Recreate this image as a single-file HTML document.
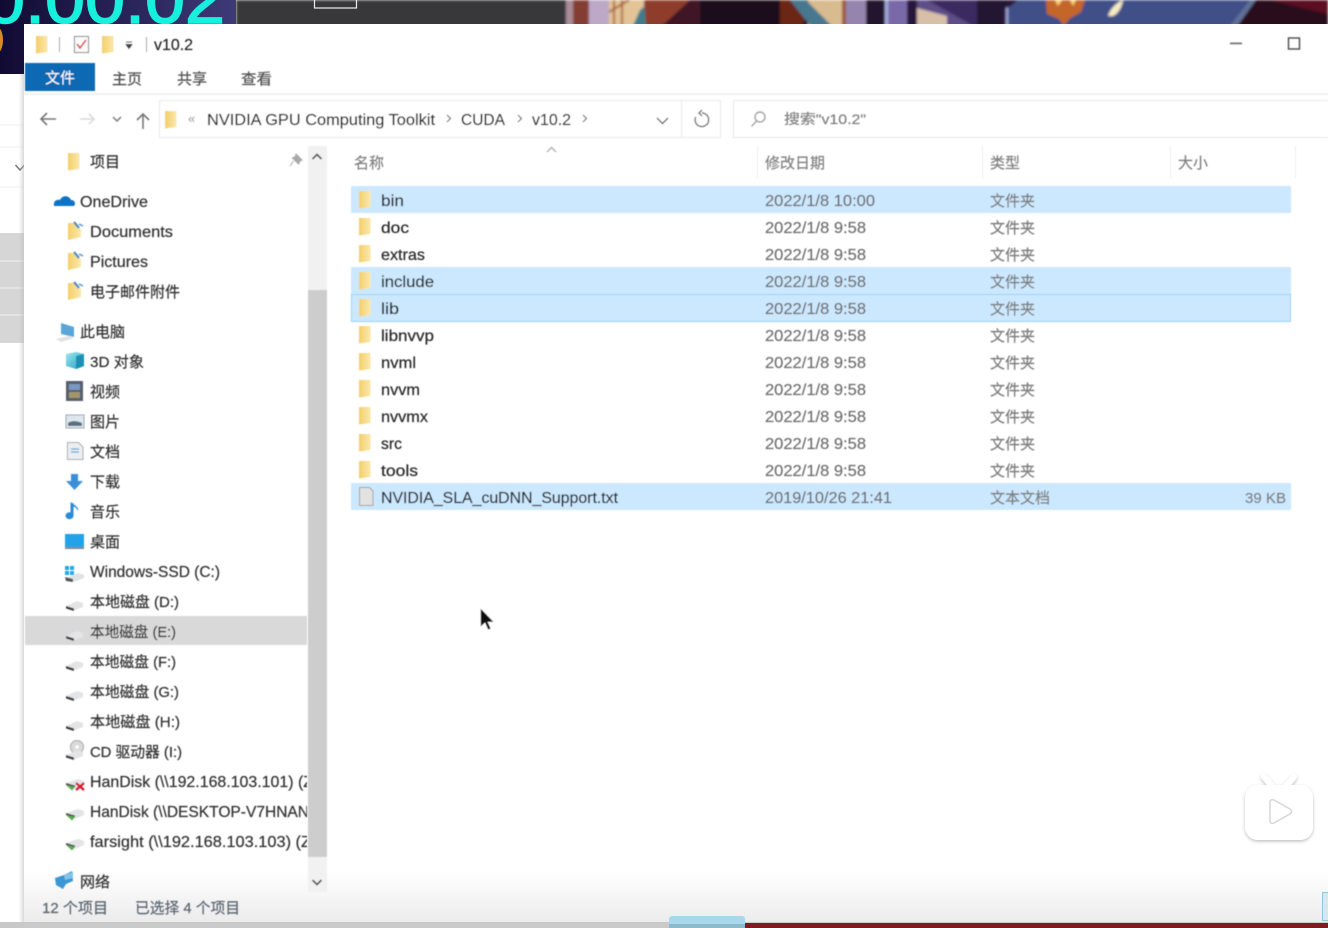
<!DOCTYPE html>
<html lang="zh">
<head>
<meta charset="utf-8">
<title>v10.2</title>
<style>
html,body{margin:0;padding:0;width:1328px;height:928px;overflow:hidden;background:#fff}
svg{display:block}
text{font-family:"Liberation Sans","Noto Sans CJK SC",sans-serif;font-size:16px;fill:#262626;stroke:#262626;stroke-width:.2px}
.z{font-size:15px}
.n text{fill:#303030;stroke:#303030}
.d text{fill:#707070;stroke:#707070;font-size:15.5px}
.t text{fill:#7c7c7c;stroke:#7c7c7c;font-size:15px}
.h text{fill:#808080;stroke:#808080;font-size:15px}
.st text{fill:#5a6570;stroke:#5a6570;font-size:15px}
</style>
</head>
<body>
<svg width="1328" height="928" viewBox="0 0 1328 928" xmlns="http://www.w3.org/2000/svg">
<defs>
<linearGradient id="nv" x1="0" x2="1" y1="0" y2="0"><stop offset="0" stop-color="#110b33"/><stop offset="1" stop-color="#3d3a78"/></linearGradient>
<linearGradient id="fd" x1="0" x2="1" y1="0" y2="0"><stop offset="0" stop-color="#f3cf68"/><stop offset="1" stop-color="#fbe8ad"/></linearGradient>
<linearGradient id="bt" x1="0" x2="0" y1="0" y2="1"><stop offset="0" stop-color="#fff"/><stop offset="1" stop-color="#ececec"/></linearGradient>
<linearGradient id="sh" x1="0" x2="1" y1="0" y2="0"><stop offset="0" stop-color="#bbb" stop-opacity="0"/><stop offset="1" stop-color="#bbb" stop-opacity=".55"/></linearGradient>
<linearGradient id="cb" x1="0" x2="1" y1="0" y2="1"><stop offset="0" stop-color="#9fe8ee"/><stop offset="1" stop-color="#1f9fc4"/></linearGradient>
<filter id="b1" x="-5%" y="-5%" width="110%" height="110%"><feGaussianBlur stdDeviation="0.4"/></filter>
<filter id="b2" x="-5%" y="-50%" width="110%" height="200%"><feGaussianBlur stdDeviation="1.2"/></filter>
<filter id="sd" x="-20%" y="-20%" width="140%" height="140%"><feDropShadow dx="0" dy="1.500" stdDeviation="1.500" flood-color="#000" flood-opacity=".25"/></filter>
<clipPath id="nc"><rect x="25" y="146" width="282" height="745"/></clipPath>
<clipPath id="tp"><rect x="236" y="0" width="1092" height="24"/></clipPath>
<symbol id="f" width="14" height="20" viewBox="0 0 14 20" overflow="visible"><path d="M0 1h11.500v16l-11.500 1.500z" fill="url(#fd)"/></symbol>
<symbol id="of" width="20" height="20" viewBox="0 0 20 20" overflow="visible"><path d="M0 1h6l7 6v8l-13 3z" fill="url(#fd)"/><path d="M6 0l5 6" stroke="#4f8cc8" stroke-width="2.200"/><path d="M11 2l4 2" stroke="#6ea2d6" stroke-width="1.800"/></symbol>
<symbol id="drv" width="22" height="12" viewBox="0 0 22 12" overflow="visible"><path d="M2 6L13 1l6 2v4l-9 3.500z" fill="#e2e4e6"/><path d="M2 6l8 2.500v2.500L2 8.500z" fill="#3c3c3c"/></symbol>
<symbol id="nd" width="22" height="14" viewBox="0 0 22 14" overflow="visible"><path d="M2 5L14 1l6 2v4l-9 4z" fill="#e2e4e6"/><path d="M2 5l9 2.500v1.500L2 7z" fill="#4a4a4a"/><path d="M2 7l9 2-3 3.500z" fill="#57ad4b"/></symbol>
</defs>

<!-- top backdrop -->
<rect width="236" height="74" fill="url(#nv)"/>
<ellipse cx="-3" cy="40" rx="6" ry="13" fill="#d98a24"/>
<text x="-15" y="23" textLength="240" lengthAdjust="spacingAndGlyphs" style="font-size:68px;fill:#16f0dc;stroke:#16f0dc;stroke-width:1.500px">0:00:02</text>
<g clip-path="url(#tp)"><g filter="url(#b2)">
<rect x="236" width="1092" height="28" fill="#2a1838"/>
<rect x="236" width="330" height="28" fill="#37373b"/>
<rect x="566" width="7" height="28" fill="#a98c98"/>
<rect x="573" width="16" height="28" fill="#843c32"/>
<rect x="589" width="20" height="28" fill="#bda8c8"/>
<rect x="609" width="35" height="28" fill="#e2c496"/>
<path d="M614 0v28M622 0v28M609 12l20-12" stroke="#a65f3c" stroke-width="2" fill="none"/>
<path d="M632 28l8-18 12-10h8l-14 28z" fill="#3e7d8c"/>
<path d="M644 0h46l-30 28h-14z" fill="#8e3d2c"/>
<path d="M690 0h30v28h-60z" fill="#401225"/>
<rect x="700" width="100" height="28" fill="#1c0a1f"/>
<path d="M780 0h30l-8 28h-22z" fill="#6c2819"/>
<rect x="808" width="34" height="28" fill="#d9bb90"/>
<path d="M790 0h16l28 28h-22z" fill="#47788f"/>
<rect x="842" width="4" height="28" fill="#9c5a38"/>
<rect x="846" width="20" height="28" fill="#9584ae"/>
<rect x="866" width="19" height="28" fill="#23142f"/>
<rect x="885" width="3" height="28" fill="#a8b0e2"/>
<rect x="888" width="19" height="28" fill="#7a69a8"/>
<rect x="907" width="10" height="28" fill="#26163a"/>
<path d="M917 0h10l80 28h-90z" fill="#5d4e88"/>
<path d="M927 0h50l28 28h-28z" fill="#3b2c60"/>
<path d="M917 8l30 8v12h-30z" fill="#d8c0a8"/>
<path d="M977 0h32l-8 10v18h-24z" fill="#221232"/>
<path d="M1008 8l10-8h232l-22 28h-220z" fill="#3f4f88"/>
<path d="M1006 8v20h2v-21z" fill="#a8b0e0"/>
<path d="M1046 0h39l-4 12-12 7-5 7-5-7-12-5z" fill="#c4652a"/>
<path d="M1055 0l3 6 4-6zM1070 0l3 6 3-6z" fill="#fbd47a"/>
<path d="M1108 16c2-7 8-13 15-16-1 7-5 14-10 16z" fill="#f7ecc4"/>
<path d="M1228 28l22-28h6l-20 28z" fill="#5f6f96"/>
<path d="M1236 28l20-28h72v28z" fill="#2b0a1e"/>
<path d="M1270 0h58v14z" fill="#5c1020"/>
</g></g>
<rect x="314.500" y="-2" width="42" height="10" fill="none" stroke="#eee" stroke-width="1.200"/>

<!-- left strip -->
<rect y="74" width="24" height="854" fill="#fff"/>
<rect y="233" width="24" height="110" fill="#d6d6d6"/>
<path d="M0 261h24M0 288h24M0 315h24" stroke="#f2f2f2" stroke-width="1"/>
<path d="M0 125h24M0 147h24M0 187h24" stroke="#eeeeee" stroke-width="1"/>
<path d="M15.500 165l4.500 5 4.500-5" fill="none" stroke="#777" stroke-width="1.500"/>
<rect x="19" y="74" width="5" height="848" fill="url(#sh)"/>

<!-- window -->
<rect x="24" y="24" width="1304" height="898" fill="#fff"/>
<rect x="24" y="870" width="1304" height="52" fill="url(#bt)"/>
<rect x="0" y="922" width="1328" height="6" fill="#c9c9c9"/>
<rect x="745" y="923" width="583" height="5" fill="#7e1c22"/>
<rect x="669" y="916" width="76" height="12" rx="3" fill="#a9d8ec"/>
<rect x="669" y="924" width="76" height="4" fill="#8cb9cc"/>
<rect x="1322.500" y="892.500" width="6" height="28" fill="#d6e8ee" stroke="#8fc6da"/>

<g filter="url(#b1)">
<!-- title bar -->
<use href="#f" x="36" y="35"/>
<rect x="59" y="37" width="1" height="15" fill="#aaa"/>
<rect x="74.500" y="36.500" width="14" height="16" fill="#fafafa" stroke="#8a8a8a"/>
<path d="M77 44l3 4 6-8" fill="none" stroke="#d9413a" stroke-width="1.500"/>
<use href="#f" x="102" y="35"/>
<path d="M126 42h6M126 44.500h6l-3 4z" fill="#444" stroke="#444" stroke-width=".7"/>
<rect x="146" y="37" width="1" height="15" fill="#aaa"/>
<text x="154" y="50" textLength="39" lengthAdjust="spacingAndGlyphs">v10.2</text>
<rect x="1230" y="42.500" width="12" height="1.800" fill="#777"/>
<rect x="1288.500" y="38" width="11" height="11" fill="none" stroke="#555" stroke-width="1.500"/>

<!-- ribbon -->
<rect x="25" y="63" width="70" height="28" fill="#1069b3"/>
<text class="z" x="45" y="83" textLength="30" lengthAdjust="spacingAndGlyphs" style="fill:#fff;stroke:#fff;stroke-width:0">文件</text>
<text class="z" x="112" y="84" textLength="30" lengthAdjust="spacingAndGlyphs" style="fill:#505050;stroke:#505050">主页</text>
<text class="z" x="177" y="84" textLength="30" lengthAdjust="spacingAndGlyphs" style="fill:#505050;stroke:#505050">共享</text>
<text class="z" x="241" y="84" textLength="31" lengthAdjust="spacingAndGlyphs" style="fill:#505050;stroke:#505050">查看</text>
<rect x="24" y="93" width="1304" height="2" fill="#f1f1f1"/>

<!-- nav -->
<path d="M56 119h-15M47 113l-6 6 6 6" fill="none" stroke="#777" stroke-width="1.600"/>
<path d="M80 119h14M89 114l5 5-5 5" fill="none" stroke="#dcdcdc" stroke-width="1.600"/>
<path d="M113 117l4 4 4-4" fill="none" stroke="#777" stroke-width="1.400"/>
<path d="M143 129v-15M137 120l6-6 6 6" fill="none" stroke="#777" stroke-width="1.600"/>
<rect x="159.500" y="100.500" width="561" height="37" fill="#fff" stroke="#e8e8e8"/>
<rect x="681" y="101" width="1" height="36" fill="#e8e8e8"/>
<use href="#f" x="165" y="110"/>
<text x="188" y="123" style="font-size:13px;fill:#888;stroke-width:0">«</text>
<text x="207" y="125" textLength="228" lengthAdjust="spacingAndGlyphs">NVIDIA GPU Computing Toolkit</text>
<path d="M447 115l3.500 3.500-3.500 3.500M518 115l3.500 3.500-3.500 3.500M583 115l3.500 3.500-3.500 3.500" fill="none" stroke="#666" stroke-width="1.200"/>
<text x="461" y="125" textLength="44" lengthAdjust="spacingAndGlyphs">CUDA</text>
<text x="532" y="125" textLength="39" lengthAdjust="spacingAndGlyphs">v10.2</text>
<path d="M657 118l5.500 5.500 5.500-5.500" fill="none" stroke="#666" stroke-width="1.400"/>
<path d="M702 113a6.800 6.800 0 1 1-6.300 4M702 110l-3 3 3 3" fill="none" stroke="#777" stroke-width="1.500"/>
<path d="M733.500 100.500H1328M733.500 100.500v37H1328" fill="none" stroke="#e8e8e8"/>
<circle cx="760" cy="117" r="5" fill="none" stroke="#999" stroke-width="1.200"/>
<path d="M756.500 121l-5 5.500" stroke="#999" stroke-width="1.300"/>
<text x="784" y="124" textLength="82" lengthAdjust="spacingAndGlyphs" style="font-size:14px;fill:#808080;stroke:#808080">搜索"v10.2"</text>

<!-- scrollbar -->
<rect x="308" y="146" width="19" height="746" fill="#f1f1f1"/>
<rect x="308" y="290" width="19" height="567" fill="#cdcdcd"/>
<path d="M312.500 159l4.500-4.500 4.500 4.500M312.500 880l4.500 4.500 4.500-4.500" fill="none" stroke="#555" stroke-width="1.800"/>

<!-- nav tree selection -->
<rect x="25" y="616" width="282" height="29" fill="#d9d9d9"/>

<!-- nav icons -->
<use href="#f" x="68" y="152"/>
<path d="M296 154l6 6-2 1-1.500 3-6-6 3-1.500zM293.500 161l-3.500 5" fill="#a9a9a9" stroke="#a9a9a9" stroke-width="1"/>
<path d="M54 206c-1-5 3-7 6-6 2-5 9-5 11 0 4 0 5 4 3 6z" fill="#0f73c6"/>
<use href="#of" x="68" y="222"/>
<use href="#of" x="68" y="252"/>
<use href="#of" x="68" y="282"/>
<path d="M61 323l13 4v10l-13-3z" fill="#5aa6d8"/>
<path d="M56 339l13-3 5 2-13 4z" fill="#dfe3e6"/>
<path d="M66 354l10-2 8 2v12l-8 3-10-3z" fill="url(#cb)"/>
<path d="M76 356l8-2v12l-8 3z" fill="#1b8fb4"/>
<rect x="66" y="381" width="17" height="20" fill="#565e70"/>
<rect x="69" y="384" width="11" height="6" fill="#7a99c0"/>
<rect x="69" y="392" width="11" height="6" fill="#a4946a"/>
<rect x="66" y="415" width="18" height="13" fill="#dfe7ee" stroke="#9aa6b2"/>
<path d="M68 423c4-3 9-2 14 0v3h-14z" fill="#5b6f83"/>
<path d="M67.500 442.500h11l4.500 4.500v12.500h-15.500z" fill="#eceef0" stroke="#a8adb2"/>
<path d="M71 449h8M71 452h8" stroke="#58a6dc" stroke-width="1.200"/>
<path d="M71 474h7v7h5l-8.500 9-8.500-9h5z" fill="#3a8fd8"/>
<path d="M73 503v13a3.500 3 0 1 1-2-3v-10c2 2 6 3 7 7-1-2-3-4-5-4z" fill="#2a8ad6" stroke="#2a8ad6"/>
<rect x="65" y="534" width="19" height="13" fill="#20a2e8"/>
<rect x="65" y="547" width="19" height="2" fill="#7c8a94"/>
<rect x="65" y="566" width="4" height="4" fill="#22a8e8"/><rect x="70" y="566" width="4" height="4" fill="#22a8e8"/>
<rect x="65" y="571" width="4" height="4" fill="#22a8e8"/><rect x="70" y="571" width="4" height="4" fill="#22a8e8"/>
<path d="M66 578l12-5 6 2v3l-10 4z" fill="#dfe2e4"/>
<path d="M65 577l8 2v3l-7-1z" fill="#555"/>
<use href="#drv" x="64" y="600"/>
<use href="#drv" x="64" y="630"/>
<use href="#drv" x="64" y="660"/>
<use href="#drv" x="64" y="690"/>
<use href="#drv" x="64" y="720"/>
<circle cx="77" cy="747" r="6.500" fill="#dadada" stroke="#aaa"/>
<circle cx="77" cy="747" r="1.800" fill="#fff"/>
<use href="#drv" x="64" y="749"/>
<use href="#nd" x="64" y="778"/>
<path d="M76 783l8 7M84 783l-8 7" stroke="#d8192b" stroke-width="2.400"/>
<use href="#nd" x="64" y="808"/>
<use href="#nd" x="64" y="838"/>
<path d="M55 878l9-3 8-4 1 10-7 3-3 5-7-4z" fill="#3a96d4"/>
<path d="M64 875l9-3v6l-8 2z" fill="#83c4ea"/>

<!-- nav labels -->
<g class="n" clip-path="url(#nc)">
<text class="z" x="90" y="167" textLength="30" lengthAdjust="spacingAndGlyphs">项目</text>
<text x="80" y="207" textLength="68" lengthAdjust="spacingAndGlyphs">OneDrive</text>
<text x="90" y="237" textLength="83" lengthAdjust="spacingAndGlyphs">Documents</text>
<text x="90" y="267" textLength="58" lengthAdjust="spacingAndGlyphs">Pictures</text>
<text class="z" x="90" y="297" textLength="90" lengthAdjust="spacingAndGlyphs">电子邮件附件</text>
<text class="z" x="80" y="337" textLength="45" lengthAdjust="spacingAndGlyphs">此电脑</text>
<text class="z" x="90" y="367" textLength="54" lengthAdjust="spacingAndGlyphs">3D 对象</text>
<text class="z" x="90" y="397" textLength="30" lengthAdjust="spacingAndGlyphs">视频</text>
<text class="z" x="90" y="427" textLength="30" lengthAdjust="spacingAndGlyphs">图片</text>
<text class="z" x="90" y="457" textLength="30" lengthAdjust="spacingAndGlyphs">文档</text>
<text class="z" x="90" y="487" textLength="30" lengthAdjust="spacingAndGlyphs">下载</text>
<text class="z" x="90" y="517" textLength="30" lengthAdjust="spacingAndGlyphs">音乐</text>
<text class="z" x="90" y="547" textLength="30" lengthAdjust="spacingAndGlyphs">桌面</text>
<text x="90" y="577" textLength="130" lengthAdjust="spacingAndGlyphs">Windows-SSD (C:)</text>
<text class="z" x="90" y="607" textLength="89" lengthAdjust="spacingAndGlyphs">本地磁盘 (D:)</text>
<text class="z" x="90" y="637" textLength="86" lengthAdjust="spacingAndGlyphs">本地磁盘 (E:)</text>
<text class="z" x="90" y="667" textLength="86" lengthAdjust="spacingAndGlyphs">本地磁盘 (F:)</text>
<text class="z" x="90" y="697" textLength="89" lengthAdjust="spacingAndGlyphs">本地磁盘 (G:)</text>
<text class="z" x="90" y="727" textLength="90" lengthAdjust="spacingAndGlyphs">本地磁盘 (H:)</text>
<text class="z" x="90" y="757" textLength="92" lengthAdjust="spacingAndGlyphs">CD 驱动器 (I:)</text>
<text x="90" y="787" textLength="223" lengthAdjust="spacingAndGlyphs">HanDisk (\\192.168.103.101) (Z</text>
<text x="90" y="817" textLength="219" lengthAdjust="spacingAndGlyphs">HanDisk (\\DESKTOP-V7HNAN</text>
<text x="90" y="847" textLength="221" lengthAdjust="spacingAndGlyphs">farsight (\\192.168.103.103) (Z</text>
<text class="z" x="80" y="887" textLength="30" lengthAdjust="spacingAndGlyphs">网络</text>
</g>

<!-- status -->
<g class="st">
<text x="42" y="913" textLength="66" lengthAdjust="spacingAndGlyphs">12 个项目</text>
<text x="135" y="913" textLength="105" lengthAdjust="spacingAndGlyphs">已选择 4 个项目</text>
</g>

<!-- column headers -->
<path d="M547 152l4.500-4.500 4.500 4.500" fill="none" stroke="#a5a5a5" stroke-width="1.200"/>
<path d="M757.500 146v32M982.500 146v32M1170.500 146v32M1295.500 146v32" stroke="#ececec"/>
<g class="h">
<text x="354" y="168" textLength="30" lengthAdjust="spacingAndGlyphs">名称</text>
<text x="765" y="168" textLength="60" lengthAdjust="spacingAndGlyphs">修改日期</text>
<text x="990" y="168" textLength="30" lengthAdjust="spacingAndGlyphs">类型</text>
<text x="1178" y="168" textLength="30" lengthAdjust="spacingAndGlyphs">大小</text>
</g>

<!-- selection rows -->
<rect x="351" y="186" width="940" height="27" fill="#cce8ff"/>
<rect x="351" y="267" width="940" height="27" fill="#cce8ff"/>
<rect x="351.500" y="294.500" width="939" height="27" fill="#cce8ff" stroke="#99d1ff"/>
<rect x="351" y="483" width="940" height="27" fill="#cce8ff"/>

<!-- file icons -->
<use href="#f" x="359" y="190"/>
<use href="#f" x="359" y="217"/>
<use href="#f" x="359" y="244"/>
<use href="#f" x="359" y="271"/>
<use href="#f" x="359" y="298"/>
<use href="#f" x="359" y="325"/>
<use href="#f" x="359" y="352"/>
<use href="#f" x="359" y="379"/>
<use href="#f" x="359" y="406"/>
<use href="#f" x="359" y="433"/>
<use href="#f" x="359" y="460"/>
<path d="M359.500 487.500h10l3.500 3.500v14.500h-13.500z" fill="#e2e2e2" stroke="#a0a0a0"/>

<!-- names -->
<g transform="translate(0,1)">
<text x="381" y="205" textLength="23" lengthAdjust="spacingAndGlyphs">bin</text>
<text x="381" y="232" textLength="28" lengthAdjust="spacingAndGlyphs">doc</text>
<text x="381" y="259" textLength="44" lengthAdjust="spacingAndGlyphs">extras</text>
<text x="381" y="286" textLength="53" lengthAdjust="spacingAndGlyphs">include</text>
<text x="381" y="313" textLength="18" lengthAdjust="spacingAndGlyphs">lib</text>
<text x="381" y="340" textLength="53" lengthAdjust="spacingAndGlyphs">libnvvp</text>
<text x="381" y="367" textLength="35" lengthAdjust="spacingAndGlyphs">nvml</text>
<text x="381" y="394" textLength="39" lengthAdjust="spacingAndGlyphs">nvvm</text>
<text x="381" y="421" textLength="47" lengthAdjust="spacingAndGlyphs">nvvmx</text>
<text x="381" y="448" textLength="21" lengthAdjust="spacingAndGlyphs">src</text>
<text x="381" y="475" textLength="37" lengthAdjust="spacingAndGlyphs">tools</text>
<text x="381" y="502" textLength="237" lengthAdjust="spacingAndGlyphs">NVIDIA_SLA_cuDNN_Support.txt</text>
</g>

<!-- dates -->
<g class="d" transform="translate(0,1)">
<text x="765" y="205" textLength="110" lengthAdjust="spacingAndGlyphs">2022/1/8 10:00</text>
<text x="765" y="232" textLength="101" lengthAdjust="spacingAndGlyphs">2022/1/8 9:58</text>
<text x="765" y="259" textLength="101" lengthAdjust="spacingAndGlyphs">2022/1/8 9:58</text>
<text x="765" y="286" textLength="101" lengthAdjust="spacingAndGlyphs">2022/1/8 9:58</text>
<text x="765" y="313" textLength="101" lengthAdjust="spacingAndGlyphs">2022/1/8 9:58</text>
<text x="765" y="340" textLength="101" lengthAdjust="spacingAndGlyphs">2022/1/8 9:58</text>
<text x="765" y="367" textLength="101" lengthAdjust="spacingAndGlyphs">2022/1/8 9:58</text>
<text x="765" y="394" textLength="101" lengthAdjust="spacingAndGlyphs">2022/1/8 9:58</text>
<text x="765" y="421" textLength="101" lengthAdjust="spacingAndGlyphs">2022/1/8 9:58</text>
<text x="765" y="448" textLength="101" lengthAdjust="spacingAndGlyphs">2022/1/8 9:58</text>
<text x="765" y="475" textLength="101" lengthAdjust="spacingAndGlyphs">2022/1/8 9:58</text>
<text x="765" y="502" textLength="127" lengthAdjust="spacingAndGlyphs">2019/10/26 21:41</text>
</g>

<!-- types -->
<g class="t" transform="translate(0,1)">
<text x="990" y="205" textLength="45" lengthAdjust="spacingAndGlyphs">文件夹</text>
<text x="990" y="232" textLength="45" lengthAdjust="spacingAndGlyphs">文件夹</text>
<text x="990" y="259" textLength="45" lengthAdjust="spacingAndGlyphs">文件夹</text>
<text x="990" y="286" textLength="45" lengthAdjust="spacingAndGlyphs">文件夹</text>
<text x="990" y="313" textLength="45" lengthAdjust="spacingAndGlyphs">文件夹</text>
<text x="990" y="340" textLength="45" lengthAdjust="spacingAndGlyphs">文件夹</text>
<text x="990" y="367" textLength="45" lengthAdjust="spacingAndGlyphs">文件夹</text>
<text x="990" y="394" textLength="45" lengthAdjust="spacingAndGlyphs">文件夹</text>
<text x="990" y="421" textLength="45" lengthAdjust="spacingAndGlyphs">文件夹</text>
<text x="990" y="448" textLength="45" lengthAdjust="spacingAndGlyphs">文件夹</text>
<text x="990" y="475" textLength="45" lengthAdjust="spacingAndGlyphs">文件夹</text>
<text x="990" y="502" textLength="60" lengthAdjust="spacingAndGlyphs">文本文档</text>
<text x="1245" y="502" textLength="41" lengthAdjust="spacingAndGlyphs">39 KB</text>
</g>

<!-- cursor -->
<path d="M480.500 608v19l4.500-4 3 7 3-1.300-3-6.700h6z" fill="#111" stroke="#fff" stroke-width=".6"/>
</g>

<!-- bilibili watermark -->
<g filter="url(#sd)">
<path d="M1264 777l8 9M1294 777l-8 9" stroke="#fff" stroke-width="6" stroke-linecap="round"/>
<rect x="1245" y="785" width="68" height="55" rx="13" fill="#fff"/>
</g>
<path d="M1270 802c0-2 2-3 4-2l16 9c2 1.500 2 3.500 0 5l-16 9c-2 1-4 0-4-2z" fill="#fff" stroke="#d6d6d6" stroke-width="1.500"/>
</svg>
</body>
</html>
